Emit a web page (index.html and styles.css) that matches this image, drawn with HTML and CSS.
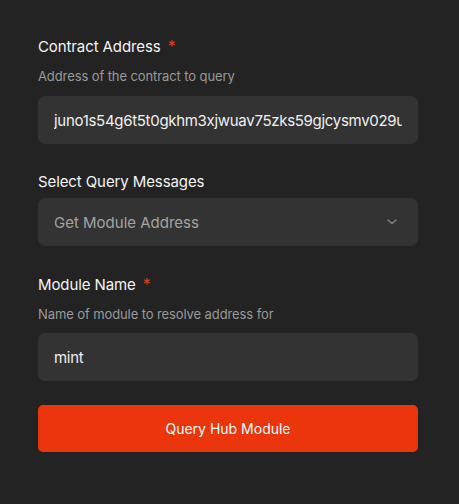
FILE: index.html
```html
<!DOCTYPE html>
<html>
<head>
<meta charset="utf-8">
<link rel="stylesheet" href="styles.css">
</head>
<body>
<form class="form">
  <div class="field">
    <div class="label">Contract Address <span class="req">*</span></div>
    <div class="desc">Address of the contract to query</div>
    <div class="input"><span class="value">juno1s54g6t5t0gkhm3xjwuav75zks59gjcysmv029uvmdkgq4p7c6hadnss5fqdr</span></div>
  </div>
  <div class="field">
    <div class="label label-tight">Select Query Messages</div>
    <div class="input select">
      <span class="value muted">Get Module Address</span>
      <svg class="chev" width="10" height="6" viewBox="0 0 10 6"><path d="M1 1l4 3.5L9 1" fill="none" stroke="#8a8a8a" stroke-width="1.2" stroke-linecap="round" stroke-linejoin="round"/></svg>
    </div>
  </div>
  <div class="field">
    <div class="label">Module Name <span class="req">*</span></div>
    <div class="desc desc-last">Name of module to resolve address for</div>
    <div class="input"><span class="value">mint</span></div>
  </div>
  <div class="btn">Query Hub Module</div>
</form>
</body>
</html>
```
FILE: styles.css
```css
html, body {
  margin: 0;
  background: #232323;
}
body {
  font-family: Inter, "Liberation Sans", sans-serif;
  width: 459px;
  height: 504px;
}
.form {
  display: flex;
  flex-direction: column;
  padding: 36px 41px 0 38px;
  gap: 28px;
}
.field {
  display: flex;
  flex-direction: column;
}
.label {
  font-size: 15px;
  line-height: 20px;
  color: #f4f4f4;
  font-weight: 400;
  letter-spacing: -0.1px;
  margin-bottom: 10px;
}
.label-tight {
  margin-bottom: 6px;
}
.req {
  color: #e0401c;
  margin-left: 3px;
  font-size: 16px;
}
.desc {
  font-size: 13px;
  line-height: 18px;
  color: #9a9a9a;
  letter-spacing: -0.1px;
  margin-bottom: 11px;
}
.desc-last {
  margin-bottom: 10px;
}
.input {
  height: 48px;
  background: #333333;
  border-radius: 7px;
  display: flex;
  align-items: center;
  padding: 0 16px;
  overflow: hidden;
}
.value {
  font-size: 15px;
  color: #f0f0f0;
  white-space: nowrap;
  overflow: hidden;
  flex: 1;
  min-width: 0;
  letter-spacing: -0.3px;
}
.muted {
  color: #a3a3a3;
  letter-spacing: 0;
}
.select {
  justify-content: space-between;
}
.chev {
  margin-right: 5px;
  flex: none;
}
.btn {
  margin-top: -4px;
  height: 47px;
  background: #eb350c;
  border-radius: 5px;
  display: flex;
  align-items: center;
  justify-content: center;
  font-size: 14px;
  color: #ffffff;
  font-weight: 400;
}
```
